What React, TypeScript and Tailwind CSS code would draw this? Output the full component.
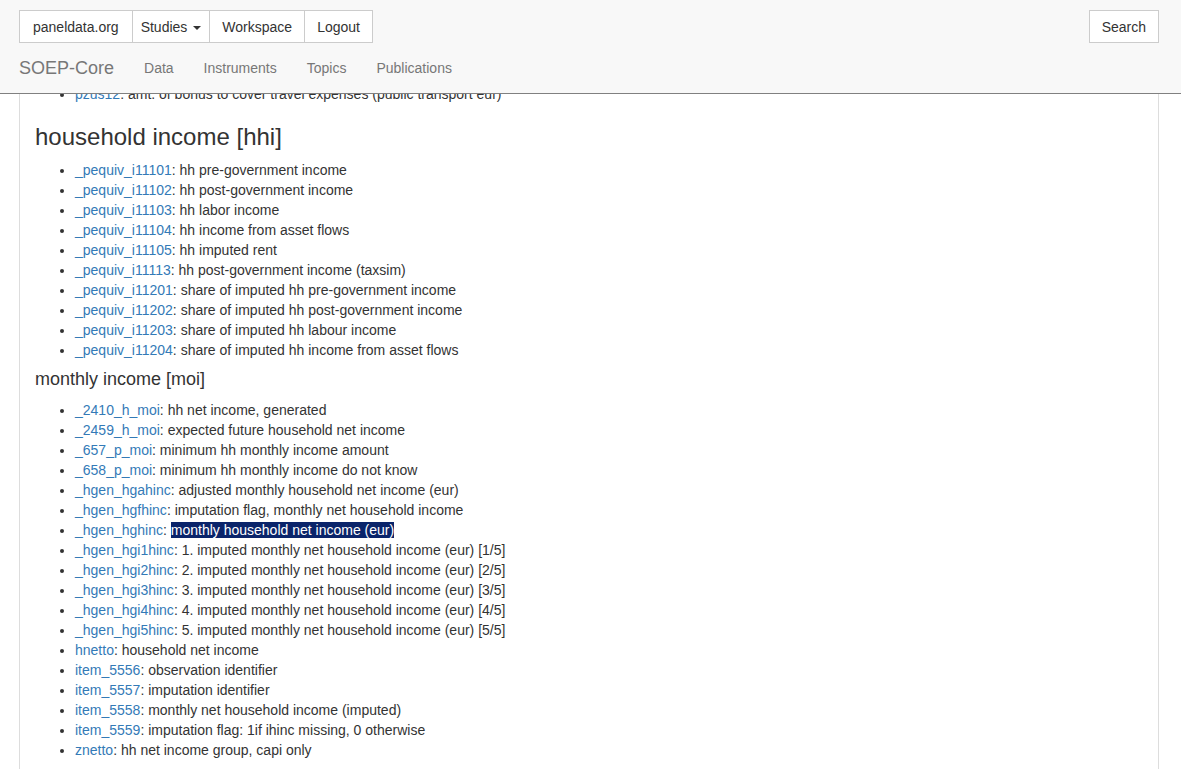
import React from "react";

type Item = { name: string; label: string; selected?: boolean };

const hhi: Item[] = [
  { name: "_pequiv_i11101", label: "hh pre-government income" },
  { name: "_pequiv_i11102", label: "hh post-government income" },
  { name: "_pequiv_i11103", label: "hh labor income" },
  { name: "_pequiv_i11104", label: "hh income from asset flows" },
  { name: "_pequiv_i11105", label: "hh imputed rent" },
  { name: "_pequiv_i11113", label: "hh post-government income (taxsim)" },
  { name: "_pequiv_i11201", label: "share of imputed hh pre-government income" },
  { name: "_pequiv_i11202", label: "share of imputed hh post-government income" },
  { name: "_pequiv_i11203", label: "share of imputed hh labour income" },
  { name: "_pequiv_i11204", label: "share of imputed hh income from asset flows" },
];

const moi: Item[] = [
  { name: "_2410_h_moi", label: "hh net income, generated" },
  { name: "_2459_h_moi", label: "expected future household net income" },
  { name: "_657_p_moi", label: "minimum hh monthly income amount" },
  { name: "_658_p_moi", label: "minimum hh monthly income do not know" },
  { name: "_hgen_hgahinc", label: "adjusted monthly household net income (eur)" },
  { name: "_hgen_hgfhinc", label: "imputation flag, monthly net household income" },
  { name: "_hgen_hghinc", label: "monthly household net income (eur)", selected: true },
  { name: "_hgen_hgi1hinc", label: "1. imputed monthly net household income (eur) [1/5]" },
  { name: "_hgen_hgi2hinc", label: "2. imputed monthly net household income (eur) [2/5]" },
  { name: "_hgen_hgi3hinc", label: "3. imputed monthly net household income (eur) [3/5]" },
  { name: "_hgen_hgi4hinc", label: "4. imputed monthly net household income (eur) [4/5]" },
  { name: "_hgen_hgi5hinc", label: "5. imputed monthly net household income (eur) [5/5]" },
  { name: "hnetto", label: "household net income" },
  { name: "item_5556", label: "observation identifier" },
  { name: "item_5557", label: "imputation identifier" },
  { name: "item_5558", label: "monthly net household income (imputed)" },
  { name: "item_5559", label: "imputation flag: 1if ihinc missing, 0 otherwise" },
  { name: "znetto", label: "hh net income group, capi only" },
];

const VarList = ({ items }: { items: Item[] }) => (
  <ul className="mb-[10px] list-disc pl-[40px]">
    {items.map((it) => (
      <li key={it.name} className="h-5 leading-5">
        <a href="#" className="text-[#337ab7]">
          {it.name}
        </a>
        :{" "}
        {it.selected ? (
          <span className="bg-[#0a246a] text-white">{it.label}</span>
        ) : (
          it.label
        )}
      </li>
    ))}
  </ul>
);

const btn =
  "h-[33px] border border-[#ccc] bg-white text-sm text-[#333] flex items-center";

export default function App() {
  return (
    <div
      className="relative h-[769px] overflow-hidden bg-white text-sm text-[#333]"
      style={{ fontFamily: '"Liberation Sans", Arial, sans-serif' }}
    >
      {/* fixed top navbar, overlays the scrolled content */}
      <nav className="absolute inset-x-0 top-0 z-10 h-[94px] border-b border-[#808080] bg-[#f8f8f8] pl-[19px] pr-[22px]">
        <div className="flex items-center justify-between pt-[10px]">
          <div className="flex">
            <button className={`${btn} px-[13px]`}>paneldata.org</button>
            <button className={`${btn} -ml-px gap-[6px] px-2`}>
              Studies
              <span className="mt-[2px] inline-block h-0 w-0 border-x-4 border-t-4 border-x-transparent border-t-[#333]"></span>
            </button>
            <button className={`${btn} -ml-px px-3`}>Workspace</button>
            <button className={`${btn} -ml-px px-3`}>Logout</button>
          </div>
          <button className={`${btn} px-3`}>Search</button>
        </div>
        <div className="flex h-[50px] items-center text-[#777]">
          <a href="#" className="pr-[15px] text-lg">
            SOEP-Core
          </a>
          <a href="#" className="px-[15px]">Data</a>
          <a href="#" className="px-[15px]">Instruments</a>
          <a href="#" className="px-[15px]">Topics</a>
          <a href="#" className="px-[15px]">Publications</a>
        </div>
      </nav>

      <main className="ml-[19px] mr-[22px] h-full border-x border-[#ddd] px-[15px] pt-[84px]">
        <ul className="mb-[10px] list-disc pl-[40px]">
          <li className="h-5 leading-5">
            <a href="#" className="text-[#337ab7]">pzus12</a>: amt. of bonus to cover travel expenses (public transport eur)
          </li>
        </ul>
        <h3 className="mt-5 mb-[10px] text-2xl leading-[1.1] font-medium">household income [hhi]</h3>
        <VarList items={hhi} />
        <h4 className="mt-[10px] mb-[10px] text-lg leading-[1.1] font-medium">monthly income [moi]</h4>
        <VarList items={moi} />
      </main>
    </div>
  );
}
